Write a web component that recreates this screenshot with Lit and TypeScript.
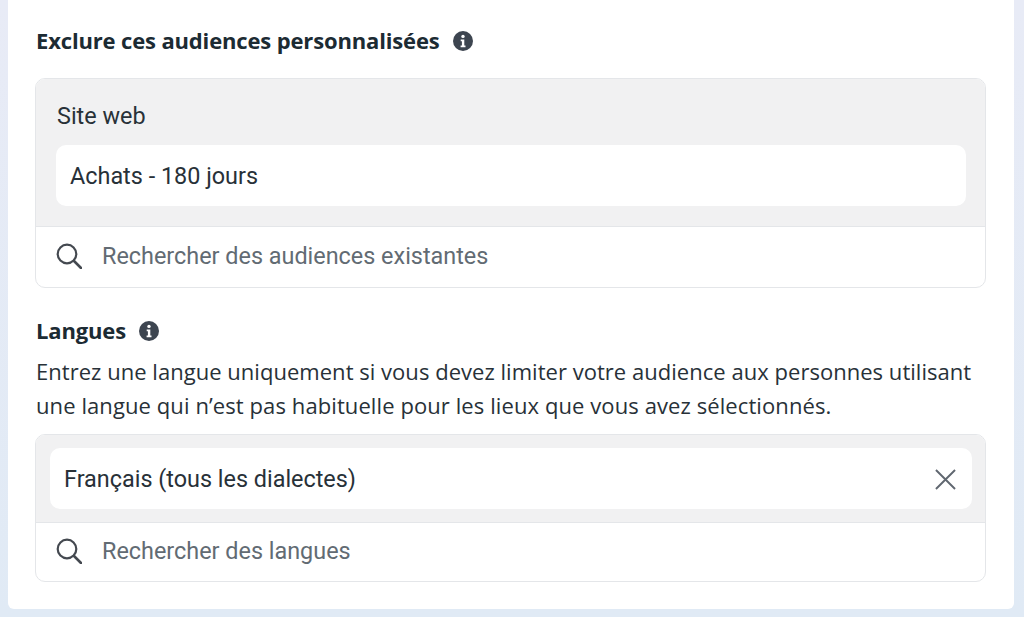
import { LitElement, html, css } from 'lit';
import { customElement } from 'lit/decorators.js';

const infoIcon = html`<svg class="info" viewBox="0 0 20 20" width="20" height="20">
  <circle cx="10" cy="10" r="10" fill="#3d4550"></circle>
  <circle cx="10" cy="5.4" r="1.7" fill="#fff"></circle>
  <path d="M7.7 8.4h3.6v6h1.2v1.8H7.6v-1.8h1.3v-4.2H7.7z" fill="#fff"></path>
</svg>`;

const searchIcon = html`<svg class="search" viewBox="0 0 26 26" width="26" height="26">
  <circle cx="11" cy="11" r="9.3" fill="none" stroke="#444950" stroke-width="2.2"></circle>
  <path d="M18 18l7 7" fill="none" stroke="#444950" stroke-width="2.6" stroke-linecap="round"></path>
</svg>`;

@customElement('app-root')
export class AppRoot extends LitElement {
  static styles = css`
    :host {
      display: block;
      height: 617px;
      overflow: hidden;
      background: linear-gradient(180deg, #e8ebf6 0%, #e0eaf5 100%);
      font-family: Roboto, "Liberation Sans", sans-serif;
      color: #1c2b33;
    }

    .card {
      box-sizing: border-box;
      width: 1006px;
      height: 609px;
      margin-left: 8px;
      padding: 27px 28px 0 27px;
      background: #fff;
      border-radius: 0 0 6px 6px;
    }

    .heading {
      box-sizing: border-box;
      display: flex;
      align-items: center;
      height: 28px;
      padding: 0 0 2px 1px;
      font-family: "Open Sans", sans-serif;
      font-size: 22px;
      font-weight: 700;
      letter-spacing: -0.15px;
      color: #1c2b33;
    }

    .info { margin: 2px 0 0 13px; flex: none; }

    .box {
      border: 1px solid #e4e6e9;
      border-radius: 10px;
      overflow: hidden;
    }

    .box-one { margin-top: 23px; margin-bottom: 29px; }
    .box-two { margin-top: 12px; }

    .selected {
      background: #f1f1f2;
      border-bottom: 1px solid #e4e6e9;
    }

    .selected-one { padding: 22px 19px 19px 20px; height: 106px; }
    .selected-two { padding: 13px 13px 13px 14px; height: 61px; }

    .label {
      padding-left: 1px;
      font-size: 23.4px;
      line-height: 30px;
      color: #283138;
      margin-bottom: 14px;
    }

    .chip {
      box-sizing: border-box;
      display: flex;
      align-items: center;
      justify-content: space-between;
      height: 61px;
      padding: 1px 16px 0 14px;
      background: #fff;
      border-radius: 10px;
      font-size: 23.4px;
      color: #283138;
    }

    .close { flex: none; }

    .search-row {
      box-sizing: border-box;
      display: flex;
      align-items: center;
      gap: 20px;
      padding: 0 0 2px 20px;
      font-size: 23.4px;
      color: #626b73;
    }

    .search-one { height: 60px; }
    .search-two { height: 58px; }
    .search { flex: none; }

    .desc {
      margin: 9px 0 0;
      padding-left: 1px;
      font-family: "Open Sans", sans-serif;
      font-size: 22px;
      line-height: 34px;
      color: #283138;
      letter-spacing: 0.03px;
      white-space: nowrap;
    }

    .line-two { letter-spacing: 0.09px; }
  `;

  render() {
    return html`
      <div class="card">
        <div class="heading">Exclure ces audiences personnalisées ${infoIcon}</div>
        <div class="box box-one">
          <div class="selected selected-one">
            <div class="label">Site web</div>
            <div class="chip">Achats - 180 jours</div>
          </div>
          <div class="search-row search-one">${searchIcon}<span>Rechercher des audiences existantes</span></div>
        </div>

        <div class="heading">Langues ${infoIcon}</div>
        <p class="desc">Entrez une langue uniquement si vous devez limiter votre audience aux personnes utilisant<br /><span class="line-two">une langue qui n’est pas habituelle pour les lieux que vous avez sélectionnés.</span></p>
        <div class="box box-two">
          <div class="selected selected-two">
            <div class="chip">
              <span>Français (tous les dialectes)</span>
              <svg class="close" viewBox="0 0 22 22" width="21" height="21">
                <path d="M1 1l20 20M21 1L1 21" fill="none" stroke="#606770" stroke-width="2"></path>
              </svg>
            </div>
          </div>
          <div class="search-row search-two">${searchIcon}<span>Rechercher des langues</span></div>
        </div>
      </div>
    `;
  }
}
